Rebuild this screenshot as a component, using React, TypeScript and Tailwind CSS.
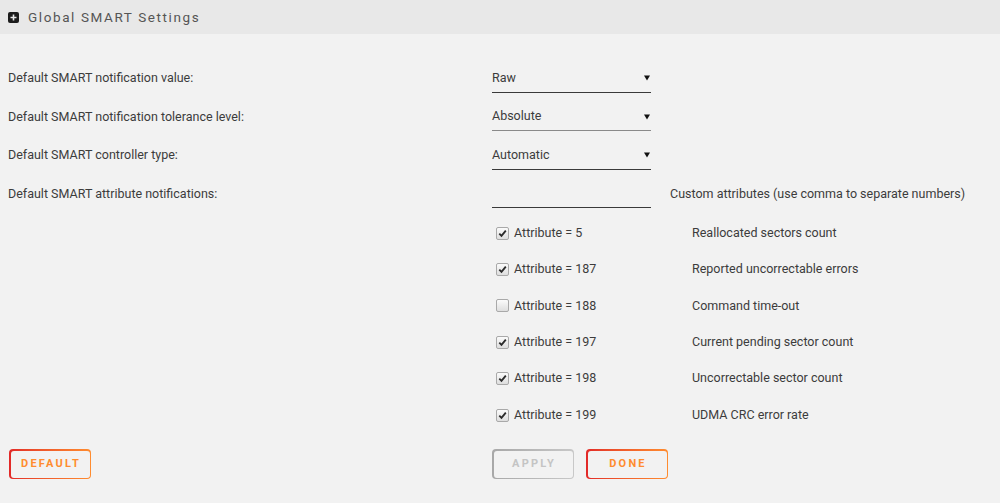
import React from "react"

const selects = [
  { label: "Default SMART notification value:", value: "Raw", line: "border-[#3a3a3a]" },
  { label: "Default SMART notification tolerance level:", value: "Absolute", line: "border-[#8a8a8a]" },
  { label: "Default SMART controller type:", value: "Automatic", line: "border-[#3a3a3a]" },
]

const attributes = [
  { id: 5, checked: true, name: "Reallocated sectors count" },
  { id: 187, checked: true, name: "Reported uncorrectable errors" },
  { id: 188, checked: false, name: "Command time-out" },
  { id: 197, checked: true, name: "Current pending sector count" },
  { id: 198, checked: true, name: "Uncorrectable sector count" },
  { id: 199, checked: true, name: "UDMA CRC error rate" },
]

function CheckBox({ checked }: { checked: boolean }) {
  return (
    <span className="flex h-[13px] w-[13px] items-center justify-center rounded-[2px] border border-[#a9a9a9] bg-gradient-to-b from-[#fbfbfb] to-[#dedede]">
      {checked && (
        <svg width="9" height="9" viewBox="0 0 9 9">
          <path d="M1.3 4.6 L3.5 6.9 L7.8 1.6" fill="none" stroke="#2b2b2b" strokeWidth="1.8" />
        </svg>
      )}
    </span>
  )
}

function Button({ text, disabled }: { text: string; disabled?: boolean }) {
  return (
    <div
      className={
        "h-[30px] w-[82px] rounded-[4px] p-[1.5px] " +
        (disabled ? "bg-gradient-to-r from-[#a8a8a8] to-[#c8c8c8]" : "bg-gradient-to-r from-[#e22828] to-[#ff8c2f]")
      }
    >
      <button
        className={
          "flex h-full w-full items-center justify-center rounded-[3px] bg-[#f2f2f2] pl-[2px] text-[11px] font-bold tracking-[2.2px] " +
          (disabled ? "text-[#c4c4c4]" : "text-[#ff8c2f]")
        }
      >
        {text}
      </button>
    </div>
  )
}

export default function App() {
  return (
    <div className="min-h-[503px] w-full bg-[#f2f2f2] text-[12.5px] text-[#3c3c3c] font-['Roboto','Liberation_Sans',sans-serif]">
      <div className="flex h-[34px] items-center bg-[#e8e8e8] pl-[8px]">
        <span className="flex h-[11px] w-[11px] items-center justify-center rounded-[2px] bg-[#1c1c1c]">
          <svg width="7" height="7" viewBox="0 0 7 7">
            <path d="M3.5 0.5 V6.5 M0.5 3.5 H6.5" stroke="#e8e8e8" strokeWidth="1.6" />
          </svg>
        </span>
        <span className="ml-[9px] text-[13.5px] tracking-[1.6px] text-[#555]">Global SMART Settings</span>
      </div>

      <div className="pt-[20px]">
        {selects.map((s) => (
          <div key={s.label} className="flex h-[38.5px] items-end">
            <div className="flex h-[28px] w-[492px] items-center pl-[8px]">{s.label}</div>
            <div className={"flex h-[28px] w-[159px] items-center justify-between border-b pr-[1px] " + s.line}>
              <span>{s.value}</span>
              <svg width="6" height="6" viewBox="0 0 6 6">
                <path d="M0 0.5 H6 L3 5.5 Z" fill="#111" />
              </svg>
            </div>
          </div>
        ))}

        <div className="flex h-[38.5px] items-end">
          <div className="flex h-[28px] w-[492px] items-center pl-[8px]">Default SMART attribute notifications:</div>
          <div className="h-[28px] w-[159px] border-b border-[#3a3a3a]" />
          <div className="flex h-[28px] items-center pl-[19px]">Custom attributes (use comma to separate numbers)</div>
        </div>

        <div className="mt-[7px]">
          {attributes.map((a) => (
            <div key={a.id} className="flex h-[36.4px] items-center">
              <div className="w-[496px]" />
              <CheckBox checked={a.checked} />
              <span className="ml-[5px] w-[178px]">Attribute = {a.id}</span>
              <span>{a.name}</span>
            </div>
          ))}
        </div>

        <div className="mt-[16px] flex">
          <div className="w-[483px] pl-[9px]">
            <Button text="DEFAULT" />
          </div>
          <div className="flex gap-[12px] pl-[9px]">
            <Button text="APPLY" disabled />
            <Button text="DONE" />
          </div>
        </div>
      </div>
    </div>
  )
}
